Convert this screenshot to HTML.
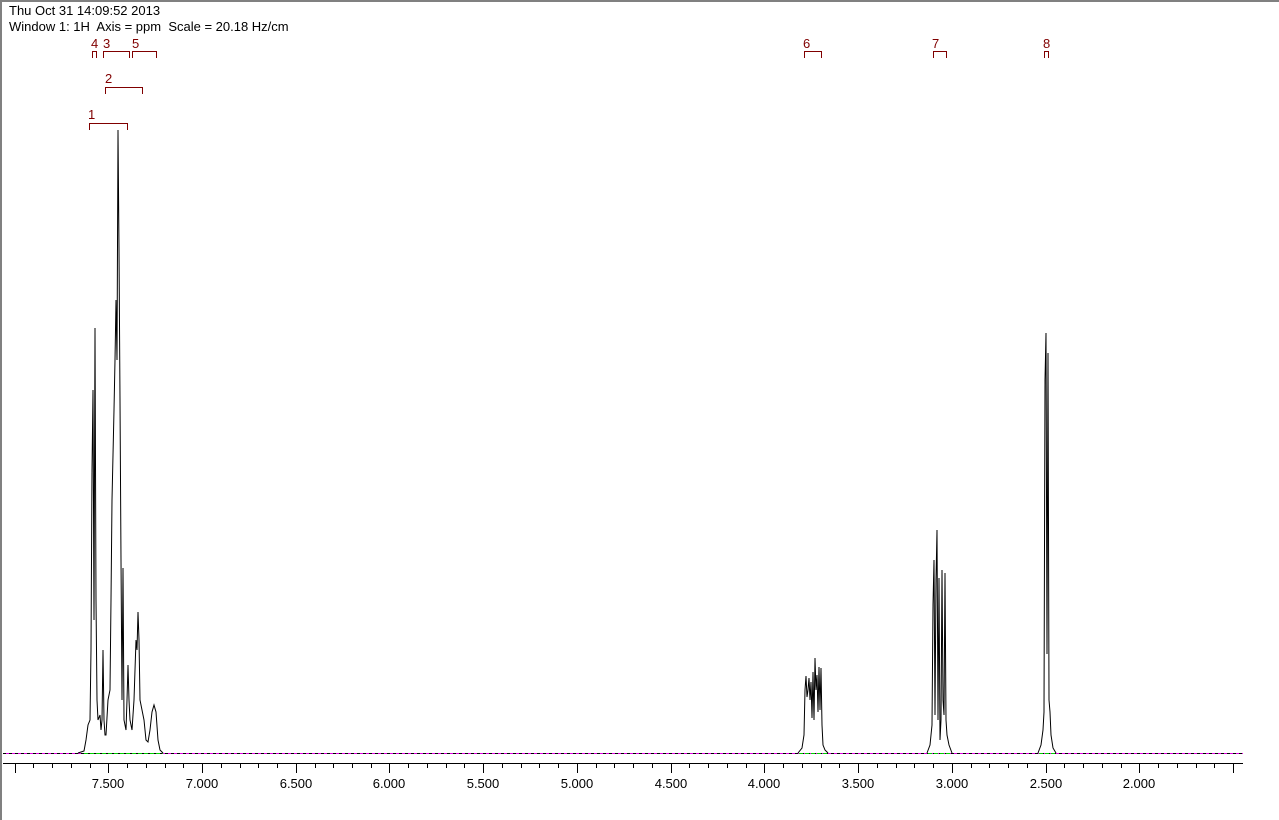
<!DOCTYPE html>
<html><head><style>
html,body{margin:0;padding:0;background:#fff;width:1279px;height:820px;overflow:hidden}
svg{display:block}
text{font-family:"Liberation Sans",sans-serif;font-size:13px;white-space:pre}
</style></head><body>
<svg width="1279" height="820" xmlns="http://www.w3.org/2000/svg" shape-rendering="crispEdges">
<rect x="0" y="0" width="1279" height="820" fill="#fff"/>
<line x1="1" y1="0" x2="1" y2="820" stroke="#808080" stroke-width="2"/>
<line x1="0" y1="1" x2="1279" y2="1" stroke="#808080" stroke-width="2"/>
<text x="9" y="15" fill="#000">Thu Oct 31 14:09:52 2013</text>
<text x="9" y="31" fill="#000" xml:space="preserve">Window 1: 1H  Axis = ppm  Scale = 20.18 Hz/cm</text>
<g fill="#800000">
<text x="91" y="48">4</text><text x="103" y="48">3</text><text x="132" y="48">5</text>
<text x="105" y="83">2</text><text x="88" y="119">1</text>
<text x="803" y="48">6</text><text x="932" y="48">7</text><text x="1043" y="48">8</text>
</g>
<g stroke="#800000" fill="none" stroke-width="1">
<path d="M92.5,58V51.5H96.5V58"/>
<path d="M103.5,58V51.5H129.5V58"/>
<path d="M132.5,58V51.5H156.5V58"/>
<path d="M105.5,94V87.5H142.5V94"/>
<path d="M89.5,130V123.5H127.5V130"/>
<path d="M804.5,58V51.5H821.5V58"/>
<path d="M933.5,58V51.5H946.5V58"/>
<path d="M1044.5,58V51.5H1048.5V58"/>
</g>
<line x1="3" y1="753.5" x2="1243" y2="753.5" stroke="#000" stroke-dasharray="3,3"/>
<line x1="6" y1="753.5" x2="1243" y2="753.5" stroke="#e000e0" stroke-dasharray="3,3"/>
<line x1="84" y1="753.5" x2="163" y2="753.5" stroke="#00d000" stroke-dasharray="4,2"/>
<line x1="799" y1="753.5" x2="827" y2="753.5" stroke="#00d000" stroke-dasharray="4,2"/>
<line x1="928" y1="753.5" x2="952" y2="753.5" stroke="#00d000" stroke-dasharray="4,2"/>
<line x1="1039" y1="753.5" x2="1055" y2="753.5" stroke="#00d000" stroke-dasharray="4,2"/>
<g stroke="#000" fill="none" stroke-width="1" shape-rendering="auto">
<path d="M78,753 L84,751 L86,740 L88,725 L90,720 L91,650 L92,470 L93,390 L94,620 L95,328 L96,600 L97,700 L98,720 L100,715 L101,730 L102,720 L103,650 L104,720 L105,735 L106,735 L108,700 L110,690 L111,600 L112,500 L114,410 L115,360 L116,300 L117,360 L118,130 L119,250 L120,400 L121,560 L122,700 L123,568 L124,720 L126,730 L127,700 L128,665 L129,700 L130,720 L132,730 L134,700 L136,640 L137,650 L138,612 L139,640 L140,700 L142,710 L144,720 L146,740 L148,742 L150,730 L152,712 L154,705 L156,712 L158,740 L160,750 L163,753"/>
<path d="M798,753 L802,748 L804,735 L805,690 L806,676 L807,697 L808,690 L809,678 L810,700 L811,682 L812,718 L813,672 L814,720 L815,658 L816,690 L817,675 L818,712 L819,667 L820,710 L821,668 L822,725 L823,745 L825,750 L828,753"/>
<path d="M927,753 L930,745 L932,725 L933,605 L934,560 L935,715 L936,580 L937,530 L938,720 L939,578 L940,740 L941,720 L942,570 L943,700 L944,715 L945,573 L946,720 L947,735 L949,745 L952,753"/>
<path d="M1038,753 L1041,745 L1043,730 L1044,712 L1045,380 L1046,333 L1047,654 L1048,353 L1049,700 L1050,712 L1051,735 L1053,748 L1056,753"/>
</g>
<line x1="3" y1="763.5" x2="1243" y2="763.5" stroke="#000"/>
<g text-anchor="middle" fill="#000">
<text x="108" y="788">7.500</text><text x="202" y="788">7.000</text><text x="296" y="788">6.500</text>
<text x="389" y="788">6.000</text><text x="483" y="788">5.500</text><text x="577" y="788">5.000</text>
<text x="671" y="788">4.500</text><text x="764" y="788">4.000</text><text x="858" y="788">3.500</text>
<text x="952" y="788">3.000</text><text x="1046" y="788">2.500</text><text x="1139" y="788">2.000</text>
</g>
<path stroke="#000" fill="none" d="
M15.5,763V773 M33.5,763V768 M52.5,763V768 M71.5,763V768 M90.5,763V768 M108.5,763V773
M127.5,763V768 M146.5,763V768 M165.5,763V768 M183.5,763V768 M202.5,763V773
M221.5,763V768 M240.5,763V768 M258.5,763V768 M277.5,763V768 M296.5,763V773
M315.5,763V768 M333.5,763V768 M352.5,763V768 M371.5,763V768 M389.5,763V773
M408.5,763V768 M427.5,763V768 M446.5,763V768 M464.5,763V768 M483.5,763V773
M502.5,763V768 M521.5,763V768 M539.5,763V768 M558.5,763V768 M577.5,763V773
M596.5,763V768 M614.5,763V768 M633.5,763V768 M652.5,763V768 M671.5,763V773
M689.5,763V768 M708.5,763V768 M727.5,763V768 M746.5,763V768 M764.5,763V773
M783.5,763V768 M802.5,763V768 M821.5,763V768 M839.5,763V768 M858.5,763V773
M877.5,763V768 M896.5,763V768 M914.5,763V768 M933.5,763V768 M952.5,763V773
M971.5,763V768 M989.5,763V768 M1008.5,763V768 M1027.5,763V768 M1046.5,763V773
M1064.5,763V768 M1083.5,763V768 M1102.5,763V768 M1121.5,763V768 M1139.5,763V773
M1158.5,763V768 M1177.5,763V768 M1196.5,763V768 M1214.5,763V768 M1233.5,763V773"/>
</svg>
</body></html>
